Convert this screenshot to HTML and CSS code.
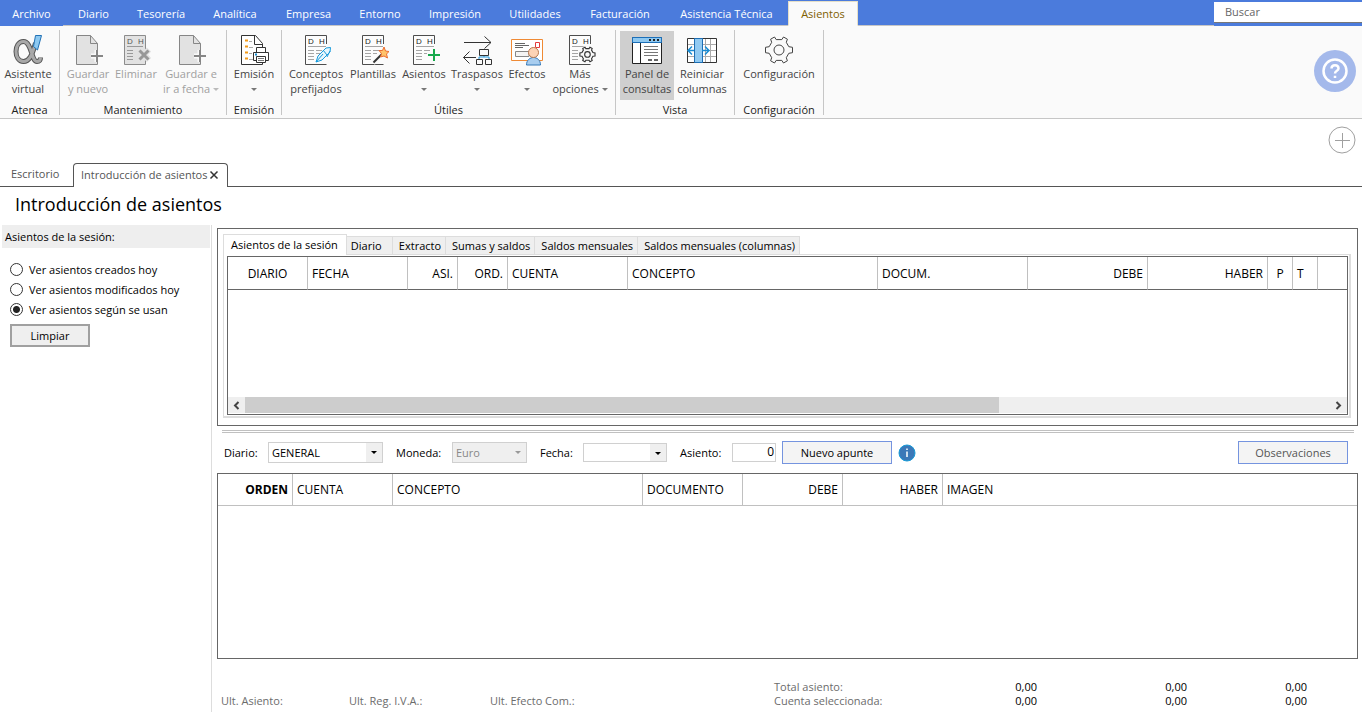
FILE: index.html
```html
<!DOCTYPE html>
<html lang="es">
<head>
<meta charset="utf-8">
<title>Introducción de asientos</title>
<link rel="stylesheet" href="styles.css">
</head>
<body>
<svg class="defs" aria-hidden="true">
  <symbol id="page-plus" viewBox="0 0 32 32"><path d="M4.500 1.500H18.500L25.500 9.500V30.500H4.500Z" fill="#e2e2e2" stroke="#868686"/><path d="M18.500 1.500V9.500H25.500" fill="none" stroke="#868686"/><path d="M25 16V28M19 22H31" stroke="#fafafa" stroke-width="5"/><path d="M25 16V28M19 22H31" stroke="#868686" stroke-width="2"/></symbol>
  <symbol id="ledger" viewBox="0 0 32 32"><path d="M26.500 10V1.500H5.500V30.500H26.500" fill="#fcfcfc" stroke="#4d4d4d"/><g fill="#222" font-family="Liberation Sans, sans-serif" font-size="8"><text x="8" y="10">D</text><text x="19" y="10">H</text></g><path d="M8 12.500H26M8 16.500H14M16 16.500H22M8 19.500H14M16 19.500H20M8 22.500H14M8 25.500H14" stroke="#a5a5a5"/></symbol>
  <symbol id="cog" viewBox="0 0 32 32"><path d="M13.200 5.600 11.500 3 7.600 5.200 8.700 8.300 6.200 12.700 2.500 13.300V18.700L6.200 19.300 8.700 23.700 7.600 26.800 11.500 29 13.200 26.400H18.800L20.500 29 24.400 26.800 23.300 23.700 25.800 19.300 29.500 18.700V13.300L25.800 12.700 23.300 8.300 24.400 5.200 20.500 3 18.800 5.600Z"/><circle cx="16" cy="16" r="5"/></symbol>
</svg>

<header>
  <nav class="menu" aria-label="Menú principal">
    <a class="file" href="#">Archivo</a><a href="#">Diario</a><a href="#">Tesorería</a><a href="#">Analítica</a><a href="#">Empresa</a><a href="#">Entorno</a><a href="#">Impresión</a><a href="#">Utilidades</a><a href="#">Facturación</a><a href="#">Asistencia Técnica</a><a class="current" href="#" aria-current="page">Asientos</a>
    <input class="search" type="search" placeholder="Buscar" aria-label="Buscar">
  </nav>

  <div class="ribbon">
    <section class="group atenea">
      <div class="tools">
        <button><svg viewBox="0 0 32 32"><path d="M23.500 9C20 22 17 27.500 11.500 27.500 1.500 27.500 1.500 7.500 11.500 7.500 20 7.500 19 27.500 25 27.500 27.500 27.500 28.500 26 28.500 23.500" fill="none" stroke="#555" stroke-width="5"/><path d="M23.500 9C20 22 17 27.500 11.500 27.500 1.500 27.500 1.500 7.500 11.500 7.500 20 7.500 19 27.500 25 27.500 27.500 27.500 28.500 26 28.500 23.500" fill="none" stroke="#a8a8a8" stroke-width="3"/><path d="M23.500 1.500H29.500L25.500 16 21.500 12.500Z" fill="#8dc9f1" stroke="#2171b5"/></svg><span>Asistente<br>virtual</span></button>
      </div>
      <h2>Atenea</h2>
    </section>
    <section class="group mantenimiento">
      <div class="tools">
        <button disabled><svg><use href="#page-plus"/></svg><span>Guardar<br>y nuevo</span></button>
        <button disabled><svg viewBox="0 0 32 32"><path d="M4.500 1.500H25.500V30.500H4.500Z" fill="#e2e2e2" stroke="#8c8c8c"/><g fill="#555" font-family="Liberation Sans, sans-serif" font-size="8"><text x="7" y="10">D</text><text x="18" y="10">H</text></g><path d="M7 12.500H23M7 16.500H13M7 19.500H13M7 22.500H13M7 25.500H13" stroke="#999"/><path d="M19 15.500 29 26M29 15.500 19 26" stroke="#e2e2e2" stroke-width="6"/><path d="M19.500 16.500 28.500 25.500M28.500 16.500 19.500 25.500" stroke="#989898" stroke-width="3"/></svg><span>Eliminar</span></button>
        <button disabled><svg><use href="#page-plus"/></svg><span>Guardar e<br>ir a fecha <i class="caret"></i></span></button>
      </div>
      <h2>Mantenimiento</h2>
    </section>
    <section class="group emision">
      <div class="tools">
        <button><svg viewBox="0 0 32 32"><path d="M3.500 1.500H17.500L24.500 9.500V30.500H3.500Z" fill="#fff" stroke="#333"/><path d="M16.500 1.500V10.500H24.500" fill="none" stroke="#333"/><path d="M7 6.500H10M7 12.500H10M7 18.500H10M7 24.500H10" stroke="#f39a18" stroke-width="2"/><path d="M11 7.500H14M11 13.500H15M11 19.500H14M11 25.500H16" stroke="#aaa"/><path d="M18.500 18.500V13.500H27.500V18.500M18.500 26.500H15.500V18.500H30.500V26.500H27.500" fill="#fff" stroke="#333"/><path d="M18.500 22.500H27.500V28.500H18.500Z" fill="#fff" stroke="#333"/><path d="M20 24.500H26M20 26.500H26" stroke="#777"/><path d="M17 20.500H19" stroke="#188bd0" stroke-width="2"/></svg><span>Emisión<br><i class="caret"></i></span></button>
      </div>
      <h2>Emisión</h2>
    </section>
    <section class="group utiles">
      <div class="tools">
        <button><svg viewBox="0 0 32 32"><use href="#ledger" width="32" height="32"/><path d="M16 28 18 22 26 14 30.500 13.500 30 18 22 26Z" fill="#e6f6fd" stroke="#199bdc"/><path d="M16 28 23 20M23 16 27 21M30 17 27 23" fill="none" stroke="#199bdc"/></svg><span>Conceptos<br>prefijados</span></button>
        <button><svg viewBox="0 0 32 32"><use href="#ledger" width="32" height="32"/><path d="M16 29 25 20" stroke="#fafafa" stroke-width="5"/><path d="M16.500 28.500 25 20" stroke="#333" stroke-width="2"/><path d="M27 13 28.500 17 32 17.500 29.500 20 30.500 24 27 22 23.500 23 24.500 19.500 22 16.500 25.500 16.500Z" fill="#ffc36b" stroke="#ed6c30"/></svg><span>Plantillas</span></button>
        <button><svg viewBox="0 0 32 32"><use href="#ledger" width="32" height="32"/><path d="M26 14V29M19 21H32" stroke="#fafafa" stroke-width="6"/><path d="M26 15V27M20 21H32" stroke="#17a94c" stroke-width="2"/></svg><span>Asientos<br><i class="caret"></i></span></button>
        <button><svg viewBox="0 0 32 32"><path d="M3 8.500H30M23.500 2.500 30 8.500 23.500 14.500M2.500 23.500H15M8.500 17.500 2.500 23.500 8.500 29.500" fill="none" stroke="#333"/><path d="M23 20V23M18 25V23H28V25" fill="none" stroke="#2196d9"/><path d="M18.500 15.500H27.500V21.500H18.500ZM15.500 25.500H21.500V30.500H15.500ZM24.500 25.500H30.500V30.500H24.500Z" fill="#fafafa" stroke="#333"/></svg><span>Traspasos<br><i class="caret"></i></span></button>
        <button><svg viewBox="0 0 32 32"><path d="M.5 5.500H31.500V26.500H.5Z" fill="#fff" stroke="#ef8a35"/><path d="M4 9.500H14M4 11.500H18M4 13.500H12" stroke="#666"/><path d="M4.500 17.500H18V22.500H4.500Z" fill="#f4f4f4" stroke="#888"/><path d="M24.500 8.500H28.500V13.500H24.500Z" fill="#fff" stroke="#e53a3a"/><path d="M15.500 31C15.500 21 29.500 21 29.500 31Z" fill="#a8cdef" stroke="#3478b8"/><circle cx="22.500" cy="18.500" r="5" fill="#fdd3b5" stroke="#b8774c"/></svg><span>Efectos<br><i class="caret"></i></span></button>
        <button><svg viewBox="0 0 32 32"><use href="#ledger" width="32" height="32"/><circle cx="23.500" cy="20.500" r="9" fill="#fafafa"/><g transform="translate(14.500 11.500) scale(.56)" fill="#fafafa" stroke="#333" stroke-width="2"><use href="#cog" width="32" height="32"/></g></svg><span>Más<br>opciones <i class="caret"></i></span></button>
      </div>
      <h2>Útiles</h2>
    </section>
    <section class="group vista">
      <div class="tools">
        <button class="pressed" aria-pressed="true"><svg viewBox="0 0 32 32"><path d="M1.500 3.500H30.500V29.500H1.500Z" fill="#fff" stroke="#222"/><path d="M1.500 3.500H30.500V8.500H1.500Z" fill="#8ec8f0" stroke="#1c6fb8"/><path d="M9.500 9V29" stroke="#222"/><path d="M18 6H20M22 6H24M26 6H28" stroke="#222" stroke-width="2"/><path d="M13 12.500H27M13 15.500H27M13 18.500H27M13 21.500H27" stroke="#777"/><path d="M17 26H21M23 26H27" stroke="#666" stroke-width="2"/></svg><span>Panel de<br>consultas</span></button>
        <button><svg viewBox="0 0 32 32"><path d="M1.500 4.500H30.500V28.500H1.500Z" fill="#fff"/><path d="M2 10.500H30M2 16.500H30M2 22.500H30M19.500 5V28M24.500 5V28" stroke="#aaa"/><path d="M1.500 4.500H30.500V28.500H1.500Z" fill="none" stroke="#333"/><path d="M8.500 4.500H16.500V28.500H8.500Z" fill="#91caf2" stroke="#1d6eb4"/><path d="M8 16.500H2M6 12.500 2 16.500 6 20.500M16 16.500H23M19 12.500 23 16.500 19 20.500" fill="none" stroke="#198bd2" stroke-width="1.500"/></svg><span>Reiniciar<br>columnas</span></button>
      </div>
      <h2>Vista</h2>
    </section>
    <section class="group config">
      <div class="tools">
        <button><svg class="gear"><use href="#cog"/></svg><span>Configuración</span></button>
      </div>
      <h2>Configuración</h2>
    </section>
    <button class="help" aria-label="Ayuda"><svg viewBox="0 0 42 42"><circle cx="21" cy="21" r="11.500"/><path d="M17.500 18.500C17.500 14 24.500 14 24.500 18.500 24.500 21 21 20.500 21 23.500M21 25.800V28"/></svg></button>
  </div>
</header>

<div class="documents">
  <button class="add" aria-label="Añadir"><svg viewBox="0 0 28 28"><circle cx="14" cy="14" r="13"/><path d="M14.500 7V22M7 14.500H22"/></svg></button>
  <nav class="doc-tabs" aria-label="Documentos">
    <a href="#">Escritorio</a>
    <div class="open"><a href="#" aria-current="page">Introducción de asientos</a><button aria-label="Cerrar"><svg viewBox="0 0 10 10"><path d="M1.500 1.500 8.500 8.500M8.500 1.500 1.500 8.500"/></svg></button></div>
  </nav>
</div>

<h1>Introducción de asientos</h1>

<div class="workspace">
  <aside>
    <fieldset>
      <legend>Asientos de la sesión:</legend>
      <label><input type="radio" name="ver">Ver asientos creados hoy</label>
      <label><input type="radio" name="ver">Ver asientos modificados hoy</label>
      <label><input type="radio" name="ver" checked>Ver asientos según se usan</label>
    </fieldset>
    <button class="clear">Limpiar</button>
  </aside>

  <main>
    <section class="queries">
      <div class="tabs" role="tablist">
        <button role="tab" aria-selected="true">Asientos de la sesión</button><button role="tab">Diario</button><button role="tab">Extracto</button><button role="tab">Sumas y saldos</button><button role="tab">Saldos mensuales</button><button role="tab">Saldos mensuales (columnas)</button>
      </div>
      <div class="tab-page">
        <div class="grid session">
          <table>
            <colgroup><col class="w80"><col class="w100"><col class="w50"><col class="w50"><col class="w120"><col class="w250"><col class="w150"><col class="w120"><col class="w120"><col class="w25"><col class="w25"><col></colgroup>
            <thead><tr><th class="mid">DIARIO</th><th>FECHA</th><th class="num">ASI.</th><th class="num">ORD.</th><th>CUENTA</th><th>CONCEPTO</th><th>DOCUM.</th><th class="num">DEBE</th><th class="num">HABER</th><th class="mid">P</th><th>T</th><td></td></tr></thead>
          </table>
          <div class="scroll">
            <button aria-label="Desplazar a la izquierda"><svg viewBox="0 0 17 17"><path d="M10.500 5 7 8.500 10.500 12"/></svg></button>
            <div class="track"><div class="thumb"></div></div>
            <button aria-label="Desplazar a la derecha"><svg viewBox="0 0 17 17"><path d="M6.500 5 10 8.500 6.500 12"/></svg></button>
          </div>
        </div>
      </div>
    </section>

    <div class="splitter"></div>

    <form class="entry">
      <label class="l-diario" for="diario">Diario:</label>
      <div class="combo c-diario"><select id="diario"><option>GENERAL</option></select></div>
      <label class="l-moneda" for="moneda">Moneda:</label>
      <div class="combo c-moneda off"><select id="moneda" disabled><option>Euro</option></select></div>
      <label class="l-fecha" for="fecha">Fecha:</label>
      <div class="combo c-fecha"><select id="fecha"><option></option></select></div>
      <label class="l-asiento" for="asiento">Asiento:</label>
      <input id="asiento" type="text" value="0">
      <button type="button" class="action">Nuevo apunte</button>
      <svg class="info" viewBox="0 0 18 18" role="img" aria-label="Información"><circle cx="9" cy="9" r="8" fill="#3b78b8" stroke="#179bd7"/><path d="M9 7.500V13M9 4.500V6" stroke="#fff" stroke-width="1.500"/></svg>
      <button type="button" class="action notes">Observaciones</button>
    </form>

    <div class="grid lines">
      <table>
        <colgroup><col class="w75"><col class="w100"><col class="w250"><col class="w100"><col class="w100"><col class="w100"><col></colgroup>
        <thead><tr><th class="num strong">ORDEN</th><th>CUENTA</th><th>CONCEPTO</th><th>DOCUMENTO</th><th class="num">DEBE</th><th class="num">HABER</th><th>IMAGEN</th></tr></thead>
      </table>
    </div>

    <footer>
      <span class="last">Ult. Asiento:</span><span class="last">Ult. Reg. I.V.A.:</span><span class="last">Ult. Efecto Com.:</span>
      <table class="totals">
        <tr><th>Total asiento:</th><td>0,00</td><td>0,00</td><td>0,00</td></tr>
        <tr><th>Cuenta seleccionada:</th><td>0,00</td><td>0,00</td><td>0,00</td></tr>
      </table>
    </footer>
  </main>
</div>
</body>
</html>
```
FILE: styles.css
```css
* { box-sizing: border-box; }
body {
  margin: 0;
  min-height: 100vh;
  display: flex;
  flex-direction: column;
  background: #fff;
  color: #000;
  font: 11px/15px "Open Sans", "Noto Sans", sans-serif;
}
button, input, select { font: inherit; color: inherit; margin: 0; padding: 0; border-radius: 0; }
button { border: 0; background: none; }
a { color: inherit; text-decoration: none; }
table { border-collapse: separate; border-spacing: 0; }
.defs { display: none; }

/* Menu bar */
.menu {
  display: grid;
  grid-template-columns: 63px 61px 74px 74px 73px 70px 80px 80px 90px 123px 70px 1fr 148px;
  grid-template-rows: 26px;
  height: 26px;
  background: #4b7bdc;
  color: #fff;
  text-align: center;
}
.menu a { height: 26px; line-height: 27px; border-bottom: 1px solid #c6c6c6; white-space: nowrap; }
.menu .file { border-color: #4b7bdc; }
.menu .current {
  height: 25px;
  margin-top: 1px;
  line-height: 24px;
  background: #fafafa;
  color: #7f6000;
  border: 1px solid #e5dfc8;
  border-bottom-color: #fafafa;
}
.menu::after { content: ""; grid-column: 12; grid-row: 1; border-bottom: 1px solid #c6c6c6; }
.search {
  grid-column: 13;
  grid-row: 1;
  width: 100%;
  height: 21px;
  margin-top: 2px;
  padding: 0 11px 2px;
  border: 0;
  border-bottom: 1px solid #777;
  background: #fff;
  outline: 0;
}
.search::placeholder { color: #666; opacity: 1; }

/* Ribbon */
.ribbon { display: flex; height: 93px; padding-top: 4px; background: #fafafa; border-bottom: 1px solid #c6c6c6; }
.group { height: 85px; padding-top: 1px; border-right: 1px solid #c6c6c6; }
.tools { display: grid; height: 69px; }
.group h2 { margin: 2px 0 0; font-size: 11px; line-height: 15px; font-weight: 400; text-align: center; color: #222; }
.tools button { display: flex; flex-direction: column; align-items: center; padding-top: 3px; color: #444; white-space: nowrap; }
.tools svg { width: 32px; height: 32px; flex: none; }
.tools button:disabled { color: #a0a0a0; }
.tools .pressed { background: #cfcfcf; }
.tools .gear { fill: none; stroke: #444; }
.caret { display: inline-block; border: 3px solid transparent; border-top-color: #777; border-bottom: 0; vertical-align: 2px; }
button:disabled .caret { border-top-color: #bbb; }
.atenea { width: 60px; }
.atenea .tools { grid-template-columns: 56px; }
.mantenimiento { width: 167px; }
.mantenimiento .tools { padding-left: 4px; grid-template-columns: 48px 48px 62px; }
.emision { width: 55px; }
.utiles { width: 334px; }
.utiles .tools { padding-left: 4px; grid-template-columns: 60px 54px 48px 58px 42px 64px; }
.vista { width: 119px; }
.vista .tools { padding-left: 4px; grid-template-columns: 54px 56px; }
.config { width: 89px; }
.help { width: 42px; height: 42px; margin: 20px 6px 0 auto; border-radius: 50%; background: #a4b9eb; }
.help svg { display: block; fill: none; stroke: #fff; stroke-width: 2.5; }

/* Document tabs */
.documents { display: flex; flex-direction: column; height: 68px; }
.add { width: 28px; height: 28px; margin: 7px 6px 0 auto; }
.add svg { display: block; fill: none; stroke: #a0a0a0; }
.doc-tabs { display: flex; height: 24px; margin-top: 9px; color: #555; line-height: 21px; }
.doc-tabs > a { width: 73px; padding-left: 11px; border-bottom: 1px solid #555; }
.doc-tabs::after { content: ""; flex: 1; border-bottom: 1px solid #555; }
.open { display: flex; align-items: center; gap: 2px; width: 155px; padding: 0 0 2px 7px; border: 1px solid #555; border-bottom: 0; border-radius: 4px 4px 0 0; }
.open a { white-space: nowrap; }
.open button { width: 10px; height: 10px; }
.open svg { display: block; stroke: #333; stroke-width: 1.5; }

h1 { margin: 0; padding: 4px 15px 8px; font-size: 18px; line-height: 26px; font-weight: 400; }

/* Side panel */
.workspace { display: flex; flex: 1; }
aside { width: 212px; border-right: 1px solid #ddd; }
fieldset { margin: 0; padding: 0; border: 0; }
legend { width: 208px; height: 23px; margin: 0 0 11px 2px; padding: 0 3px; background: #eee; line-height: 24px; }
fieldset label { display: flex; align-items: center; gap: 6px; height: 20px; padding-left: 10px; }
input[type="radio"] { appearance: none; width: 13px; height: 13px; border: 1px solid #333; border-radius: 50%; background: #fff; }
input[type="radio"]:checked { background: radial-gradient(circle, #222 0 3px, #fff 4px); }
.clear { width: 80px; height: 23px; margin: 5px 10px; border: 2px solid #a0a0a0; background: #efefef; }

/* Main area */
main { display: flex; flex: 1; flex-direction: column; min-width: 0; padding: 3px 4px 0 5px; }
.queries { padding: 5px 6px 7px 5px; border: 1px solid #666; }
.tabs { display: flex; align-items: flex-end; height: 20px; }
.tabs button { position: relative; height: 18px; padding: 0 4px 0 6px; background: #efefef; border: 1px solid #ddd; border-left: 0; border-bottom: 0; white-space: nowrap; }
.tabs button:nth-child(2) { width: 46px; padding-left: 4px; text-align: left; }
.tabs [aria-selected] { height: 21px; margin-bottom: -1px; padding: 0 8px 2px 7px; border-left: 1px solid #ddd; background: #fff; }
.tab-page { padding: 1px 1px 1px 3px; border: 1px solid #ddd; border-right-width: 2px; border-bottom-width: 2px; }
.grid { display: flex; flex-direction: column; border: 1px solid #666; }
.grid table { width: 100%; table-layout: fixed; }
.grid th, .grid td { height: 32px; padding: 0 4px; border-right: 1px solid #c0c0c0; border-bottom: 1px solid #c0c0c0; font-size: 12px; font-weight: 400; text-align: left; }
.grid tr > :last-child { border-right: 0; }
.grid .num { text-align: right; }
.grid .mid { text-align: center; padding: 0; }
.grid .strong { font-weight: 700; }
.session { height: 159px; justify-content: space-between; }
.session th, .session td { height: 33px; border-bottom-color: #666; }
.w25 { width: 25px; }
.w50 { width: 50px; }
.w75 { width: 75px; }
.w80 { width: 80px; }
.w100 { width: 100px; }
.w120 { width: 120px; }
.w150 { width: 150px; }
.w250 { width: 250px; }
.scroll { display: flex; height: 17px; padding-bottom: 1px; background: #efefef; background-clip: content-box; }
.scroll button { width: 17px; }
.scroll svg { display: block; fill: none; stroke: #444; stroke-width: 2; }
.track { flex: 1; }
.thumb { width: 69.5%; height: 100%; background: #cdcdcd; }
.splitter { height: 3px; margin: 4px 4px 8px 5px; border: solid #c0c0c0; border-width: 1px 0; }

/* Entry toolbar */
.entry { display: flex; align-items: center; height: 23px; margin-bottom: 9px; padding: 0 10px 0 7px; }
.l-diario { width: 44px; }
.l-moneda { width: 56px; margin-left: 13px; }
.l-fecha { width: 43px; margin-left: 13px; }
.l-asiento { width: 52px; margin-left: 13px; }
.combo { position: relative; height: 21px; border: 1px solid #d0d0d0; background: linear-gradient(to left, #efefef 16px, #fff 16px); }
.combo::after { content: ""; position: absolute; right: 5px; top: 8px; border: 3px solid transparent; border-top-color: #000; border-bottom: 0; pointer-events: none; }
.combo select { display: block; width: 100%; height: 100%; padding-left: 3px; border: 0; background: none; appearance: none; opacity: 1; }
.combo.off { background: #efefef; color: #888; }
.combo.off::after { border-top-color: #999; }
.c-diario { width: 115px; }
.c-moneda { width: 75px; }
.c-fecha { width: 84px; height: 19px; }
#asiento { width: 44px; height: 19px; padding: 0 1px 2px; border: 1px solid #d0d0d0; text-align: right; font-size: 12px; }
.action { width: 110px; height: 23px; margin-left: 6px; border: 1px solid #7594df; background: #f4f4f4; }
.info { width: 18px; height: 18px; margin-left: 6px; }
.notes { margin-left: auto; color: #555; }
.lines { flex: 1; min-height: 120px; }

/* Footer */
footer { display: grid; grid-template-columns: 128px 141px 1fr auto; align-items: end; height: 53px; padding: 0 51px 4px 4px; color: #6c6c6c; }
footer span, footer td, footer th { line-height: 14px; }
.totals th { width: 163px; padding: 0; font-weight: 400; text-align: left; }
.totals td { width: 120px; padding: 0; text-align: right; color: #000; }
.totals td:nth-child(2) { width: 100px; }
.totals td:nth-child(3) { width: 150px; }
```
